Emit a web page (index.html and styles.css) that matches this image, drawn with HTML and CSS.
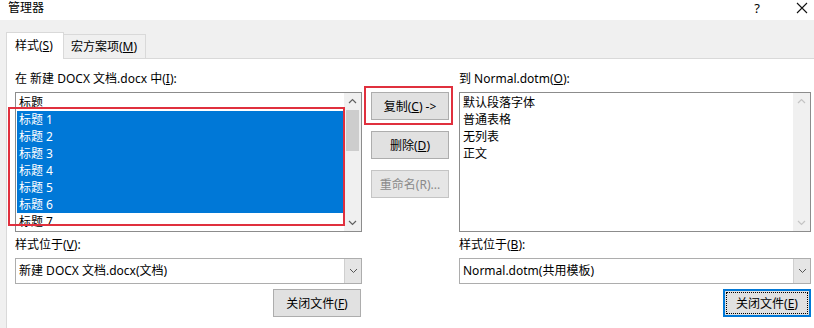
FILE: index.html
```html
<!DOCTYPE html>
<html lang="zh-CN">
<head>
    <meta charset="UTF-8">
    <title>管理器</title>
    <link rel="stylesheet" href="styles.css">
</head>
<body>
    <div class="window">
        <div class="titlebar">
            <span class="title">管理器</span>
            <span class="help">?</span>
            <svg class="close-x" width="12" height="12" viewBox="0 0 12 12"><path d="M1 1 L11 11 M11 1 L1 11" stroke="#111" stroke-width="1.1" fill="none"/></svg>
        </div>
        <div class="client">
            <div class="tabs">
                <div class="tab active">样式(<u>S</u>)</div>
                <div class="tab">宏方案项(<u>M</u>)</div>
            </div>
            <div class="tab-page">
                <div class="pane pane-left">
                    <div class="label">在 新建 DOCX 文档.docx 中(<u>I</u>):</div>
                    <div class="listbox">
                        <ul class="items">
                            <li>标题</li>
                            <li class="sel">标题 1</li>
                            <li class="sel">标题 2</li>
                            <li class="sel">标题 3</li>
                            <li class="sel">标题 4</li>
                            <li class="sel">标题 5</li>
                            <li class="sel">标题 6</li>
                            <li>标题 7</li>
                        </ul>
                        <div class="scrollbar">
                            <svg class="arrow" width="17" height="17" viewBox="0 0 17 17"><path d="M5 10 L8.5 6.5 L12 10" stroke="#606060" stroke-width="1.2" fill="none"/></svg>
                            <div class="thumb"></div>
                            <div class="track"></div>
                            <svg class="arrow" width="17" height="17" viewBox="0 0 17 17"><path d="M5 7 L8.5 10.5 L12 7" stroke="#606060" stroke-width="1.2" fill="none"/></svg>
                        </div>
                    </div>
                    <div class="label loc-label">样式位于(<u>V</u>):</div>
                    <div class="combo">
                        <span class="combo-text">新建 DOCX 文档.docx(文档)</span>
                        <span class="drop"><svg width="9" height="6" viewBox="0 0 9 6"><path d="M1 1 L4.5 4.5 L8 1" stroke="#555" stroke-width="1" fill="none"/></svg></span>
                    </div>
                    <div class="btn-row">
                        <button class="btn close-left">关闭文件(<u>F</u>)</button>
                    </div>
                </div>

                <div class="actions">
                    <button class="btn">复制(<u>C</u>) -&gt;</button>
                    <button class="btn">删除(<u>D</u>)</button>
                    <button class="btn" disabled>重命名(R)...</button>
                </div>

                <div class="pane pane-right">
                    <div class="label">到 Normal.dotm(<u>O</u>):</div>
                    <div class="listbox">
                        <ul class="items">
                            <li>默认段落字体</li>
                            <li>普通表格</li>
                            <li>无列表</li>
                            <li>正文</li>
                        </ul>
                        <div class="scrollbar disabled">
                            <svg class="arrow" width="17" height="17" viewBox="0 0 17 17"><path d="M5 10 L8.5 6.5 L12 10" stroke="#c4c4c4" stroke-width="1.2" fill="none"/></svg>
                            <div class="track"></div>
                            <svg class="arrow" width="17" height="17" viewBox="0 0 17 17"><path d="M5 7 L8.5 10.5 L12 7" stroke="#c4c4c4" stroke-width="1.2" fill="none"/></svg>
                        </div>
                    </div>
                    <div class="label loc-label">样式位于(<u>B</u>):</div>
                    <div class="combo">
                        <span class="combo-text">Normal.dotm(共用模板)</span>
                        <span class="drop"><svg width="9" height="6" viewBox="0 0 9 6"><path d="M1 1 L4.5 4.5 L8 1" stroke="#555" stroke-width="1" fill="none"/></svg></span>
                    </div>
                    <div class="btn-row">
                        <button class="btn default"><span class="focus">关闭文件(<u>E</u>)</span></button>
                    </div>
                </div>
            </div>
        </div>

        <!-- red annotation boxes -->
        <div class="mark mark-list"></div>
        <div class="mark mark-copy"></div>
    </div>
</body>
</html>
```

FILE: styles.css
```css
* { box-sizing: border-box; }
body { margin: 0; font-family: "Noto Sans", "Noto Sans CJK SC", sans-serif; font-size: 12px; color: #000; background: #f0f0f0; }
ul { margin: 0; padding: 0; list-style: none; }
u { text-underline-offset: 1px; }

.window { position: relative; width: 814px; height: 328px; overflow: hidden; background: #f0f0f0; }

.titlebar { height: 20px; background: #fff; display: flex; align-items: center; padding-left: 8px; }
.title { flex: 1; font-size: 12px; line-height: 16px; margin-top: -4px; }
.help { font-size: 13px; margin-right: 36px; margin-top: -4px; }
.close-x { margin-right: 6px; margin-top: -4px; }

.client { padding: 12px 0 0 6px; }

.tabs { display: flex; align-items: flex-end; height: 26px; }
.tab { height: 24px; line-height: 23px; padding: 0 8px 0 7px; background: #f0f0f0; border: 1px solid #d9d9d9; border-left: none; border-bottom: none; }
.tab.active { height: 27px; line-height: 26px; width: 58px; padding-left: 8px; background: #fff; border-left: 1px solid #d9d9d9; margin-bottom: -1px; position: relative; z-index: 1; }

.tab-page { display: flex; height: 280px; background: #fff; border: 1px solid #d9d9d9; border-right: none; padding: 12px 0 0 8px; }

.pane { display: flex; flex-direction: column; }
.pane-left { width: 347px; }
.pane-right { width: 352px; }

.label { height: 16px; line-height: 16px; white-space: nowrap; }
.loc-label { margin-top: 5px; }

.listbox { display: flex; height: 140px; margin-top: 5px; border: 1px solid #8c8c8c; background: #fff; }
.items { flex: 1; padding: 1px 1px 0 1px; overflow: hidden; }
.items li { height: 17px; line-height: 17px; padding-left: 2px; white-space: nowrap; }
.items li.sel { background: #0078d7; color: #fff; }

.scrollbar { width: 17px; display: flex; flex-direction: column; background: #f0f0f0; }
.scrollbar .arrow { display: block; flex: none; }
.scrollbar .thumb { height: 41px; margin: 0 2px; background: #cdcdcd; flex: none; }
.scrollbar .track { flex: 1; }

.combo { display: flex; height: 26px; margin-top: 5px; border: 1px solid #adadad; background: #fff; }
.combo-text { flex: 1; line-height: 24px; padding-left: 3px; white-space: nowrap; }
.drop { width: 17px; background: #e5e5e5; border-left: 1px solid #cfcfcf; display: flex; align-items: center; justify-content: center; }

.btn-row { display: flex; justify-content: flex-end; margin-top: 5px; }
.btn { font: inherit; color: #000; height: 28px; width: 88px; padding: 0; background: #e1e1e1; border: 1px solid #adadad; }
.btn:disabled { color: #8a8a8a; background: #e6e6e6; border-color: #c4c4c4; }
.close-left { margin-right: 1px; }
.btn.default { border: 2px solid #0078d7; padding: 1px; }
.btn .focus { display: flex; align-items: center; justify-content: center; height: 100%; border: 1px dotted #000; }

.actions { width: 97px; display: flex; flex-direction: column; gap: 11px; padding: 21px 0 0 9px; }
.actions .btn { width: 78px; flex: none; }

.mark { position: absolute; border: 2px solid #e0303e; }
.mark-list { left: 8px; top: 107px; width: 337px; height: 119px; }
.mark-copy { left: 364px; top: 86px; width: 89px; height: 39px; }
```
